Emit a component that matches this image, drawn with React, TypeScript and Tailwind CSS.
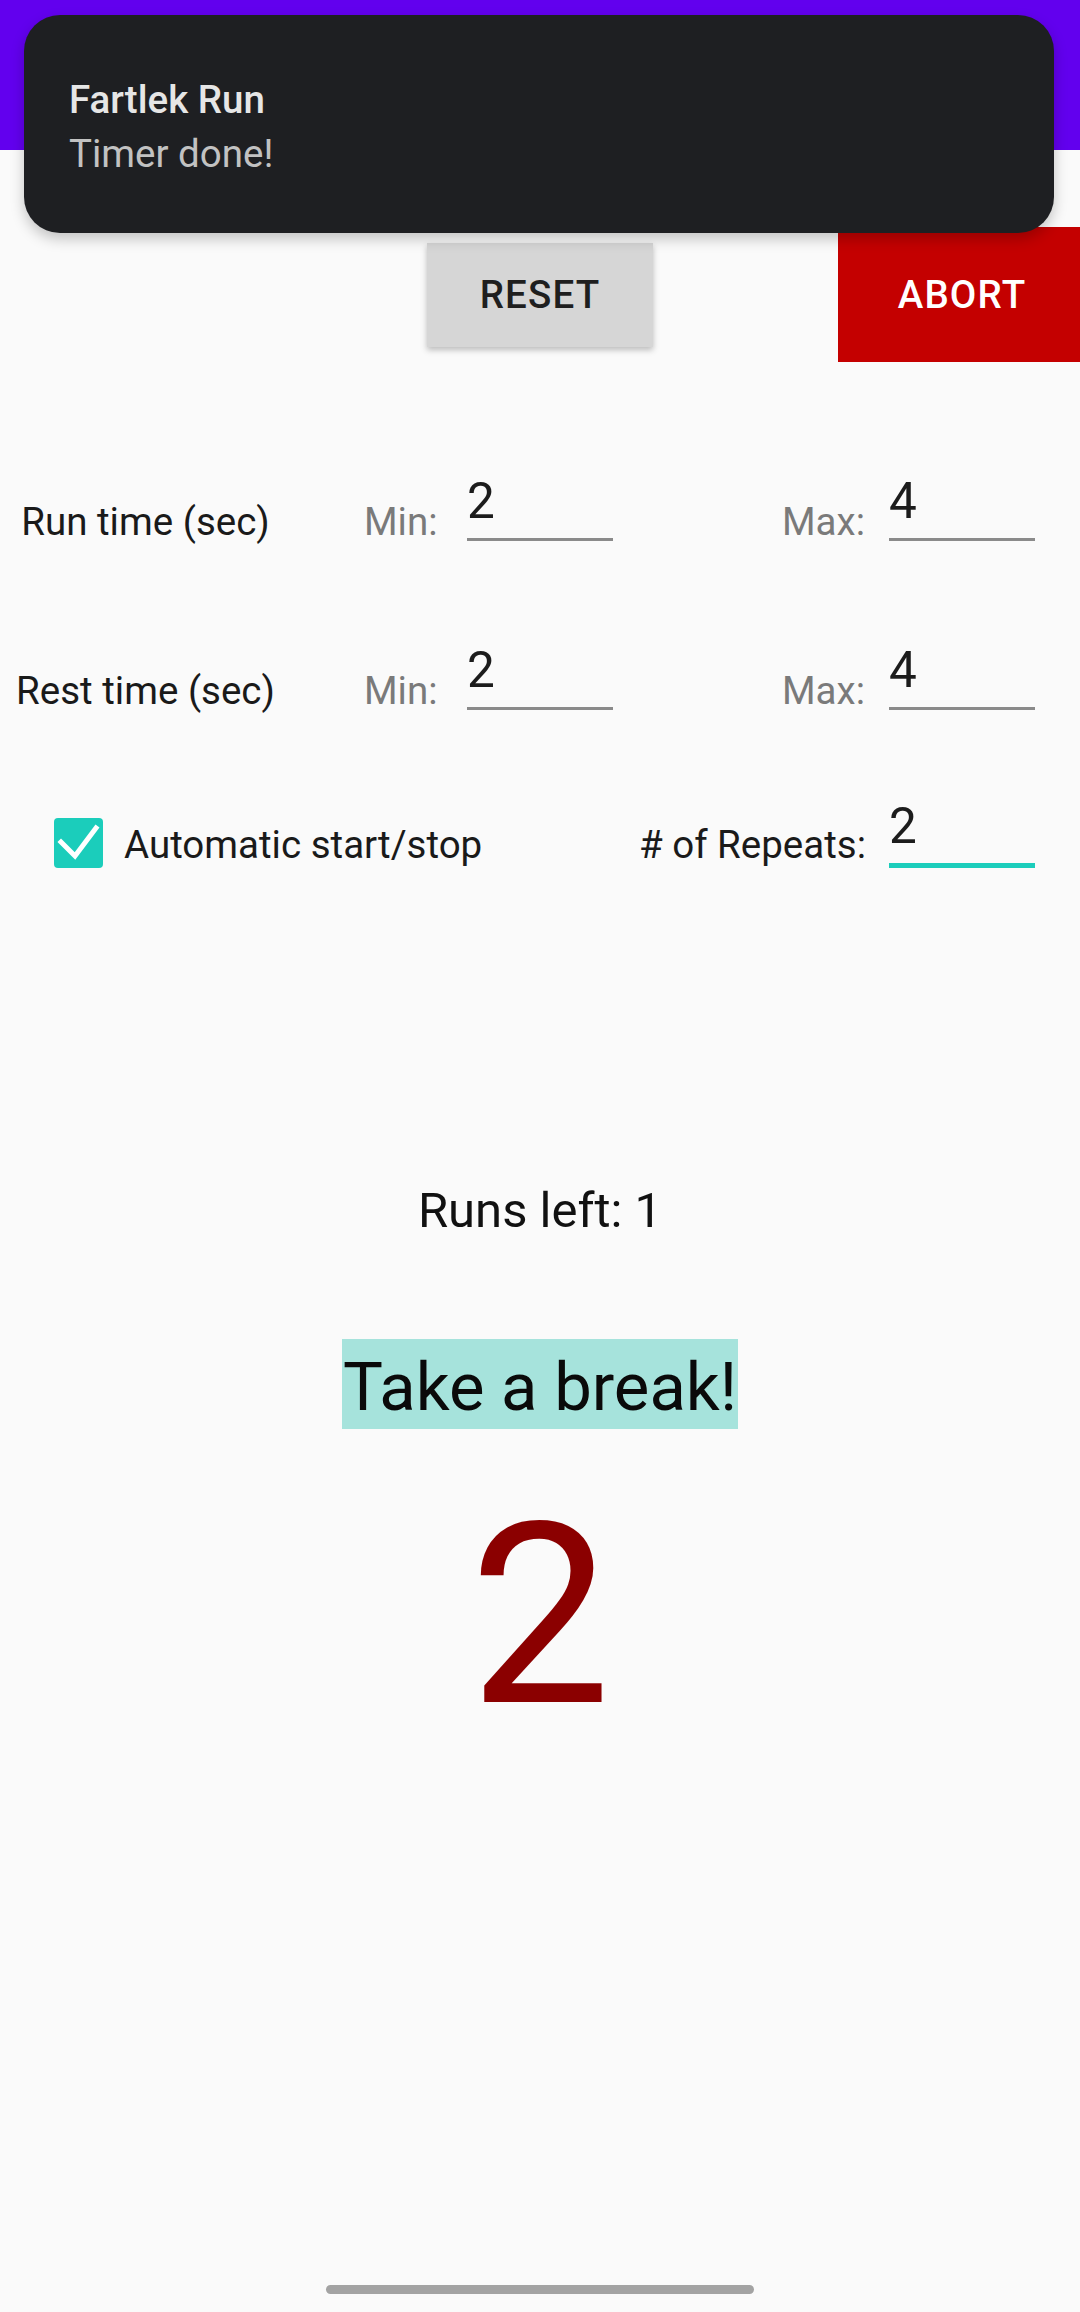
import { useState } from "react";

const font = { fontFamily: "Roboto, 'Noto Sans', sans-serif" };

const NumberField = ({ value, active }: { value: string; active?: boolean }) => (
  <div
    className={
      active
        ? "w-[146px] shrink-0 border-b-[5px] border-[#1bcdbb] pb-[12px]"
        : "w-[146px] shrink-0 border-b-[3px] border-[#8a8a8a] pb-[12px]"
    }
  >
    <div className="text-[49.5px] leading-[50px] text-[#1c1c1c]">{value}</div>
  </div>
);

const TimeRow = ({ label, min, max, className }: { label: string; min: string; max: string; className: string }) => (
  <div className={"flex items-end " + className}>
    <div className="w-[291px] shrink-0 text-center text-[38.5px] leading-[39px] text-[#1a1a1a]">{label}</div>
    <div className="w-[176px] shrink-0 pl-[73px] text-[38.5px] leading-[39px] text-[#7a7a7a]">Min:</div>
    <NumberField value={min} />
    <div className="w-[276px] shrink-0 pl-[169px] text-[38.5px] leading-[39px] text-[#7a7a7a]">Max:</div>
    <NumberField value={max} />
  </div>
);

export default function App() {
  const [auto, setAuto] = useState(true);

  return (
    <div className="relative flex min-h-[2312px] w-[1080px] flex-col overflow-hidden bg-[#fafafa]" style={font}>
      {/* app bar */}
      <div className="h-[150px] shrink-0 bg-[#6200ee]" />

      {/* buttons */}
      <div className="mt-[77px] flex h-[135px] items-center">
        <button className="ml-[427px] h-[104px] w-[226px] shrink-0 bg-[#d6d6d6] text-[38.5px] font-medium tracking-[0.03em] text-[#1f1f1f] shadow-[0_3px_6px_rgba(0,0,0,0.25)]">
          RESET
        </button>
        <button className="ml-[185px] h-[135px] w-[248px] shrink-0 bg-[#c40000] text-[38.5px] font-medium tracking-[0.03em] text-white">
          ABORT
        </button>
      </div>

      <TimeRow label="Run time (sec)" min="2" max="4" className="mt-[114px]" />
      <TimeRow label="Rest time (sec)" min="2" max="4" className="mt-[104px]" />

      <div className="mt-[91px] flex items-end pr-[45px]">
        <button
          onClick={() => setAuto(!auto)}
          className="ml-[54px] flex h-[50px] w-[49px] shrink-0 items-center justify-center rounded-[4px] bg-[#1bcdbb]"
        >
          <svg width="49" height="50" viewBox="0 0 49 50">
            {auto && (
              <path d="M7 24 L21 38 L42 10" fill="none" stroke="#ffffff" strokeWidth="5" strokeLinecap="square" />
            )}
          </svg>
        </button>
        <div className="mb-[4px] ml-[21px] text-[38.5px] leading-[39px] text-[#1a1a1a]">Automatic start/stop</div>
        <div className="flex-1" />
        <div className="mb-[4px] mr-[23px] text-[38.5px] leading-[39px] text-[#1a1a1a]"># of Repeats:</div>
        <NumberField value="2" active />
      </div>

      <div className="mt-[318px] text-center text-[49px] leading-[50px] text-[#111111]">Runs left: 1</div>

      <div className="mt-[103px] flex justify-center">
        <div className="bg-[#a6e3dc] px-[1px] pt-[6px] text-[67px] leading-[84px] text-[#0a0a0a]">Take a break!</div>
      </div>

      <div className="mt-[61px] text-center text-[252px] leading-[252px] text-[#8b0000]">2</div>

      {/* gesture bar */}
      <div className="mt-auto mb-[18px] flex justify-center">
        <div className="h-[9px] w-[428px] rounded-full bg-[#a3a3a3]" />
      </div>

      {/* notification */}
      <div className="absolute left-[24px] top-[15px] h-[218px] w-[1030px] rounded-[36px] bg-[#1e1f22] pl-[45px] pt-[58px] shadow-[0_6px_14px_rgba(0,0,0,0.22)]">
        <div className="text-[38.5px] font-medium leading-[54px] text-[#e6e6e6]">Fartlek Run</div>
        <div className="text-[38.5px] leading-[54px] text-[#c2c2c2]">Timer done!</div>
      </div>
    </div>
  );
}
